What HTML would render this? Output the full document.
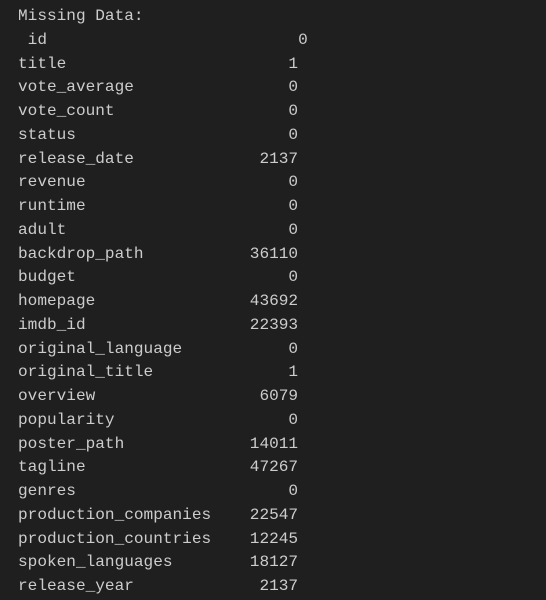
<!DOCTYPE html>
<html><head><style>
html,body{margin:0;padding:0;background:#1f1f1f;width:546px;height:600px;overflow:hidden}
pre{margin:0;padding:5px 0 0 18px;font-family:"Liberation Mono",monospace;font-size:16.1px;line-height:23.75px;color:#cccccc}
</style></head><body><pre>Missing Data:
 id                          0
title                       1
vote_average                0
vote_count                  0
status                      0
release_date             2137
revenue                     0
runtime                     0
adult                       0
backdrop_path           36110
budget                      0
homepage                43692
imdb_id                 22393
original_language           0
original_title              1
overview                 6079
popularity                  0
poster_path             14011
tagline                 47267
genres                      0
production_companies    22547
production_countries    12245
spoken_languages        18127
release_year             2137</pre></body></html>
